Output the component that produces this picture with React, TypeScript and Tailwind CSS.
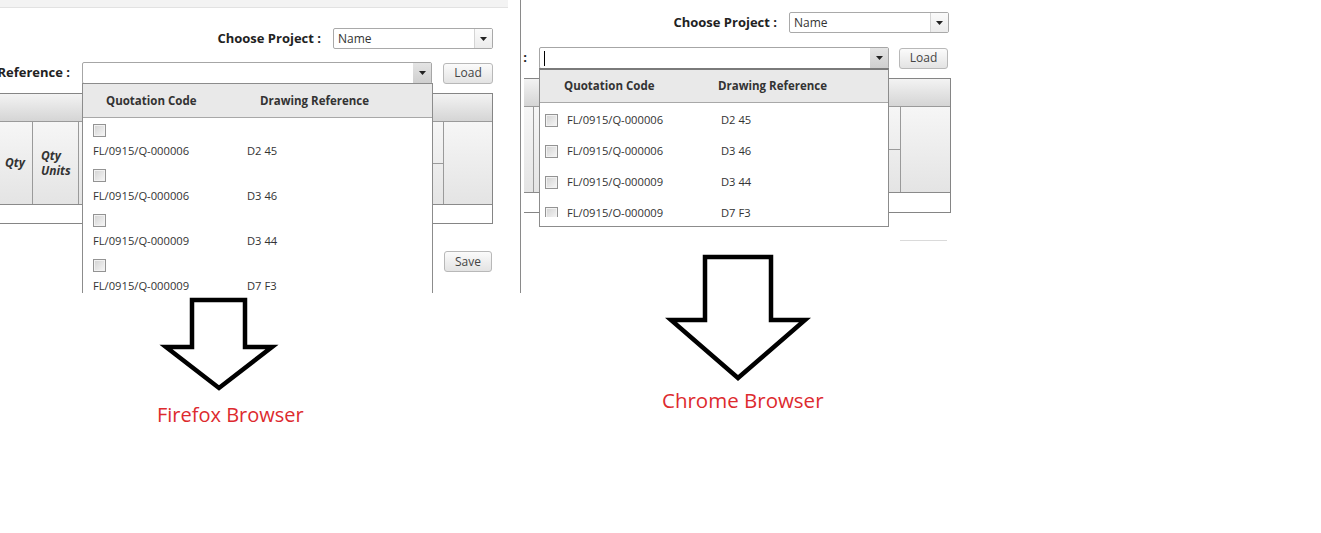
import React from 'react';

const rows = [
  { code: 'FL/0915/Q-000006', ref: 'D2 45' },
  { code: 'FL/0915/Q-000006', ref: 'D3 46' },
  { code: 'FL/0915/Q-000009', ref: 'D3 44' },
  { code: 'FL/0915/Q-000009', ref: 'D7 F3' },
];

function Caret() {
  return (
    <svg width="7" height="4" viewBox="0 0 7 4">
      <path d="M0 0h7L3.5 4z" fill="#222" />
    </svg>
  );
}

function Checkbox() {
  return (
    <div className="h-[13px] w-[13px] shrink-0 border border-[#939393] bg-gradient-to-br from-[#d2d2d2] to-[#f7f7f7] shadow-[inset_0_0_0_1px_#f2f2f2]" />
  );
}

function NameSelect() {
  return (
    <div className="ml-[12px] flex h-[21px] w-[160px] items-stretch rounded-[2px] border border-[#a9a9a9] bg-white">
      <div className="flex flex-1 items-center pl-[4px] text-[12px] text-[#333]">Name</div>
      <div className="flex w-[18px] items-center justify-center border-l border-[#d4d4d4] bg-gradient-to-b from-[#fafafa] to-[#ececec]">
        <Caret />
      </div>
    </div>
  );
}

function Combo({ cursor }: { cursor?: boolean }) {
  return (
    <div className="flex h-[22px] w-[350px] shrink-0 items-stretch rounded-[2px] border border-[#a6a6a6] bg-white">
      <div className="flex flex-1 items-center pl-[4px]">
        {cursor && <div className="h-[15px] w-[1px] bg-black" />}
      </div>
      <div className="flex w-[18px] items-center justify-center bg-gradient-to-b from-[#e4e4e4] to-[#cfcfcf]">
        <Caret />
      </div>
    </div>
  );
}

function Button({ label, w }: { label: string; w: string }) {
  return (
    <div className={`flex h-[21px] items-center justify-center rounded-[3px] border border-[#b8b8b8] bg-gradient-to-b from-[#fbfbfb] to-[#e3e3e3] text-[12px] text-[#444] ${w}`}>
      {label}
    </div>
  );
}

function RefLabel() {
  return (
    <div className="flex w-[0px] shrink-0 justify-end whitespace-nowrap text-[13px] font-bold text-[#222]">
      Reference :
    </div>
  );
}

export default function App() {
  return (
    <div className="flex h-[533px] w-[1321px] items-start overflow-hidden bg-white font-['Open_Sans',sans-serif] text-[#333]">
      {/* firefox side */}
      <div className="flex w-[521px] shrink-0 flex-col">
        <div className="relative h-[293px] w-[521px] overflow-hidden border-r border-[#8a8a8a]">
          <div className="h-[8px] w-[508px] border-b border-[#e2e2e2] bg-[#f3f3f3]" />
          <div className="mt-[20px] flex h-[21px] items-center justify-end pr-[27px]">
            <span className="text-[13px] font-bold text-[#222]">Choose Project :</span>
            <NameSelect />
          </div>
          <div className="mt-[13px] flex h-[22px] items-center">
            <div className="flex w-[82px] shrink-0 justify-end pr-[12px]">
              <RefLabel />
            </div>
            <Combo />
            <div className="ml-[11px]">
              <Button label="Load" w="w-[50px]" />
            </div>
          </div>

          <div className="-ml-[3px] mt-[9px] w-[496px] border border-[#858585]">
            <div className="h-[28px] border-b border-[#9a9a9a] bg-gradient-to-b from-[#f3f3f3] to-[#d5d5d5]" />
            <div className="flex h-[83px] border-b border-[#8a8a8a] bg-gradient-to-b from-[#f6f6f6] to-[#e4e4e4]">
              <div className="flex w-[35px] items-center justify-center border-r border-[#9a9a9a] text-[12px] font-bold italic text-[#333]">
                Qty
              </div>
              <div className="flex w-[46px] flex-col justify-center border-r border-[#9a9a9a] pl-[8px] text-[12px] font-bold italic leading-[15px] text-[#333]">
                <span>Qty</span>
                <span>Units</span>
              </div>
              <div className="w-[354px] border-r border-[#9a9a9a]" />
              <div className="flex w-[11px] flex-col border-r border-[#9a9a9a]">
                <div className="h-[42px] border-b border-[#9a9a9a]" />
              </div>
              <div className="flex-1" />
            </div>
            <div className="h-[18px] bg-white" />
          </div>
          <div className="ml-[444px] mt-[27px]">
            <Button label="Save" w="w-[48px]" />
          </div>

          {/* open dropdown */}
          <div className="absolute left-[82px] top-[83px] h-[240px] w-[351px] border border-[#8c8c8c] bg-white">
            <div className="flex h-[34px] items-center border-b border-[#a8a8a8] bg-[#e9e9e9] pl-[23px] text-[11.5px] font-bold text-[#333]">
              <span className="w-[154px]">Quotation Code</span>
              <span>Drawing Reference</span>
            </div>
            {rows.map((r, i) => (
              <div key={i} className="pb-[3px] pl-[10px] pt-[6px]">
                <Checkbox />
                <div className="mt-[5px] flex h-[18px] items-center text-[11.2px] text-[#333]">
                  <span className="w-[154px]">{r.code}</span>
                  <span>{r.ref}</span>
                </div>
              </div>
            ))}
          </div>
        </div>

        <svg className="ml-[158px] mt-[1px]" width="122" height="100" viewBox="0 0 122 100">
          <polygon
            points="34,6 87,6 87,53 114,53 61,94 8,53 34,53"
            fill="white"
            stroke="black"
            strokeWidth="4.5"
            strokeLinejoin="miter"
          />
        </svg>
        <div className="ml-[157px] mt-[7px] text-[20px] leading-[28px] text-[#dd2a2e]">Firefox Browser</div>
      </div>

      {/* chrome side */}
      <div className="flex w-[440px] shrink-0 flex-col overflow-hidden">
        <div className="relative">
          <div className="mt-[12px] flex h-[21px] items-center justify-end pr-[12px]">
            <span className="text-[13px] font-bold text-[#222]">Choose Project :</span>
            <NameSelect />
          </div>
          <div className="mt-[14px] flex h-[22px] items-center">
            <div className="flex w-[18px] shrink-0 justify-end pr-[12px]">
              <RefLabel />
            </div>
            <Combo cursor />
            <div className="ml-[10px]">
              <Button label="Load" w="w-[49px]" />
            </div>
          </div>

          <div className="ml-[3px] mt-[9px] w-[427px] border-y border-r border-[#858585]">
            <div className="h-[28px] border-b border-[#9a9a9a] bg-gradient-to-b from-[#f3f3f3] to-[#d5d5d5]" />
            <div className="flex h-[86px] border-b border-[#8a8a8a] bg-gradient-to-b from-[#f6f6f6] to-[#e4e4e4]">
              <div className="w-[10px] border-r border-[#9a9a9a]" />
              <div className="w-[355px] border-r border-[#9a9a9a]" />
              <div className="flex w-[12px] flex-col border-r border-[#9a9a9a]">
                <div className="h-[43px] border-b border-[#9a9a9a]" />
              </div>
              <div className="flex-1" />
            </div>
            <div className="h-[19px] bg-white" />
          </div>
          <div className="ml-[379px] mt-[27px] h-[1px] w-[47px] bg-[#dadada]" />

          {/* open dropdown */}
          <div className="absolute left-[18px] top-[68px] w-[350px] border border-t-2 border-[#8c8c8c] border-t-[#7a7a7a] bg-white pb-[9px]">
            <div className="flex h-[33px] items-center border-b border-[#a8a8a8] bg-[#e9e9e9] pl-[24px] text-[11.5px] font-bold text-[#333]">
              <span className="w-[154px]">Quotation Code</span>
              <span>Drawing Reference</span>
            </div>
            <div className="h-[114px] overflow-hidden pt-[2px]">
              {rows.map((r, i) => (
                <div key={i} className="flex h-[31px] items-center pl-[5px] text-[11.2px] text-[#333]">
                  <Checkbox />
                  <span className="ml-[9px] w-[154px]">{r.code}</span>
                  <span>{r.ref}</span>
                </div>
              ))}
            </div>
          </div>
        </div>

        <svg className="ml-[144px] mt-[10px]" width="146" height="133" viewBox="0 0 146 133">
          <polygon
            points="40,6 106,6 106,69 140,69 73,127 6,69 40,69"
            fill="white"
            stroke="black"
            strokeWidth="4.5"
            strokeLinejoin="miter"
          />
        </svg>
        <div className="ml-[141px] mt-[2px] text-[20.5px] leading-[28px] text-[#dd2a2e]">Chrome Browser</div>
      </div>
    </div>
  );
}
